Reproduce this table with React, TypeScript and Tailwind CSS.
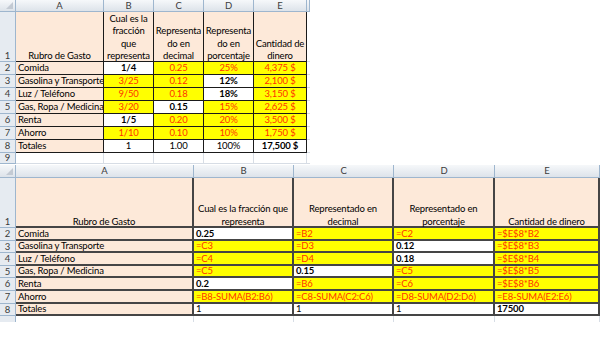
import React from "react";

type Kind = "y" | "b" | "w" | "p";

interface CellProps {
  kind: Kind;
  text: string;
  center?: boolean;
  heavy?: boolean;
}

// colour + weight per cell kind, written out in full
const kindClass: Record<Kind, string> = {
  y: "bg-[#ffff00] text-[#ff3300]",
  b: "bg-white text-black font-bold",
  w: "bg-white text-black",
  p: "bg-[#fde9d9] text-black",
};

const top: [string, [string, Kind][]][] = [
  ["Comida", [["1/4", "b"], ["0.25", "y"], ["25%", "y"], ["4,375 $", "y"]]],
  ["Gasolina y Transporte", [["3/25", "y"], ["0.12", "y"], ["12%", "b"], ["2,100 $", "y"]]],
  ["Luz / Teléfono", [["9/50", "y"], ["0.18", "y"], ["18%", "b"], ["3,150 $", "y"]]],
  ["Gas, Ropa / Medicina", [["3/20", "y"], ["0.15", "b"], ["15%", "y"], ["2,625 $", "y"]]],
  ["Renta", [["1/5", "b"], ["0.20", "y"], ["20%", "y"], ["3,500 $", "y"]]],
  ["Ahorro", [["1/10", "y"], ["0.10", "y"], ["10%", "y"], ["1,750 $", "y"]]],
  ["Totales", [["1", "w"], ["1.00", "w"], ["100%", "w"], ["17,500 $", "b"]]],
];

const bottom: [string, [string, Kind][]][] = [
  ["Comida", [["0.25", "b"], ["=B2", "y"], ["=C2", "y"], ["=$E$8*B2", "y"]]],
  ["Gasolina y Transporte", [["=C3", "y"], ["=D3", "y"], ["0.12", "b"], ["=$E$8*B3", "y"]]],
  ["Luz / Teléfono", [["=C4", "y"], ["=D4", "y"], ["0.18", "b"], ["=$E$8*B4", "y"]]],
  ["Gas, Ropa / Medicina", [["=C5", "y"], ["0.15", "b"], ["=C5", "y"], ["=$E$8*B5", "y"]]],
  ["Renta", [["0.2", "b"], ["=B6", "y"], ["=C6", "y"], ["=$E$8*B6", "y"]]],
  ["Ahorro", [["=B8-SUMA(B2:B6)", "y"], ["=C8-SUMA(C2:C6)", "y"], ["=D8-SUMA(D2:D6)", "y"], ["=E8-SUMA(E2:E6)", "y"]]],
  ["Totales", [["1", "w"], ["1", "w"], ["1", "w"], ["17500", "b"]]],
];

function Corner() {
  return (
    <div className="relative border-r border-b border-[#9eb6ce] bg-gradient-to-b from-[#f6f8fa] to-[#dde3ea]">
      <svg className="absolute right-[2px] bottom-[2px]" width="7" height="7" viewBox="0 0 7 7">
        <polygon points="7,0 7,7 0,7" fill="#c3cad3" />
      </svg>
    </div>
  );
}

function ColHead({ label }: { label: string }) {
  return (
    <div className="flex items-center justify-center border-r border-b border-[#9eb6ce] bg-gradient-to-b from-[#f6f8fa] to-[#dde3ea] text-[9.5px] leading-none text-[#3b3b3b]">
      {label}
    </div>
  );
}

function RowHead({ n, bottomAlign }: { n: string; bottomAlign?: boolean }) {
  return (
    <div
      className={`flex justify-center border-r border-b border-[#9eb6ce] bg-[#e6ebf1] text-[9.5px] leading-none text-[#3b3b3b] ${
        bottomAlign ? "items-end pb-[1px]" : "items-center"
      }`}
    >
      {n}
    </div>
  );
}

function Cell({ kind, text, center, heavy }: CellProps) {
  return (
    <div
      className={`flex items-center overflow-hidden whitespace-nowrap leading-none ${kindClass[kind]} ${
        center ? "justify-center" : "justify-start pl-[2px]"
      } ${heavy ? "border-r-2 border-b-2 border-[#454545]" : "border-r border-b border-[#1a1a1a]"}`}
    >
      {text}
    </div>
  );
}

function HeadCell({ lines, heavy }: { lines: string[]; heavy?: boolean }) {
  return (
    <div
      className={`flex flex-col items-center justify-end bg-[#fde9d9] text-center leading-[12.5px] text-black ${
        heavy ? "border-r-2 border-b-2 border-[#454545]" : "border-r border-b border-[#1a1a1a]"
      }`}
    >
      {lines.map((l) => (
        <span key={l} className={`relative whitespace-nowrap ${heavy ? "top-[2px]" : "top-[1.5px]"}`}>
          {l}
        </span>
      ))}
    </div>
  );
}

function Blank({ last }: { last?: boolean }) {
  return <div className={`bg-white ${last ? "" : "border-r"} border-b border-[#d7dde5]`} />;
}

function TopSheet() {
  return (
    <div className="grid w-[310px] grid-cols-[16px_88px_50px_50px_50px_53px_3px] grid-rows-[12px_50px_repeat(7,13px)_11px]">
      <Corner />
      {["A", "B", "C", "D", "E", ""].map((c, i) => (
        <ColHead key={i} label={c} />
      ))}

      <RowHead n="1" bottomAlign />
      <HeadCell lines={["Rubro de Gasto"]} />
      <HeadCell lines={["Cual es la", "fracción", "que", "representa"]} />
      <HeadCell lines={["Representa", "do en", "decimal"]} />
      <HeadCell lines={["Representa", "do en", "porcentaje"]} />
      <HeadCell lines={["Cantidad de", "dinero"]} />
      <Blank last />

      {top.map(([label, vals], r) => (
        <React.Fragment key={label}>
          <RowHead n={String(r + 2)} />
          <Cell kind="p" text={label} />
          {vals.map(([t, k], c) => (
            <Cell key={c} kind={k} text={t} center />
          ))}
          <Blank last />
        </React.Fragment>
      ))}

      <RowHead n="9" />
      {[0, 1, 2, 3, 4].map((i) => (
        <Blank key={i} />
      ))}
      <Blank last />
    </div>
  );
}

function BottomSheet() {
  return (
    <div className="grid w-[600px] grid-cols-[16px_178px_100px_100px_101px_105px] grid-rows-[13px_50px_repeat(7,12.6px)_6px]">
      <Corner />
      {["A", "B", "C", "D", "E"].map((c) => (
        <ColHead key={c} label={c} />
      ))}

      <RowHead n="1" bottomAlign />
      <HeadCell heavy lines={["Rubro de Gasto"]} />
      <HeadCell heavy lines={["Cual es la fracción que", "representa"]} />
      <HeadCell heavy lines={["Representado en", "decimal"]} />
      <HeadCell heavy lines={["Representado en", "porcentaje"]} />
      <HeadCell heavy lines={["Cantidad de dinero"]} />

      {bottom.map(([label, vals], r) => (
        <React.Fragment key={label}>
          <RowHead n={String(r + 2)} />
          <Cell kind="p" text={label} heavy />
          {vals.map(([t, k], c) => (
            <Cell key={c} kind={k} text={t} heavy />
          ))}
        </React.Fragment>
      ))}

      <div className="border-r border-[#9eb6ce] bg-[#e6ebf1]" />
      {[0, 1, 2, 3, 4].map((i) => (
        <div key={i} className="border-r border-[#d7dde5] bg-white" />
      ))}
    </div>
  );
}

export default function App() {
  return (
    <div className="h-[340px] w-[600px] overflow-hidden bg-white font-['Lato',sans-serif] text-[9.5px] tracking-[-0.15px]">
      <TopSheet />
      <div className="h-[1px]" />
      <BottomSheet />
    </div>
  );
}
